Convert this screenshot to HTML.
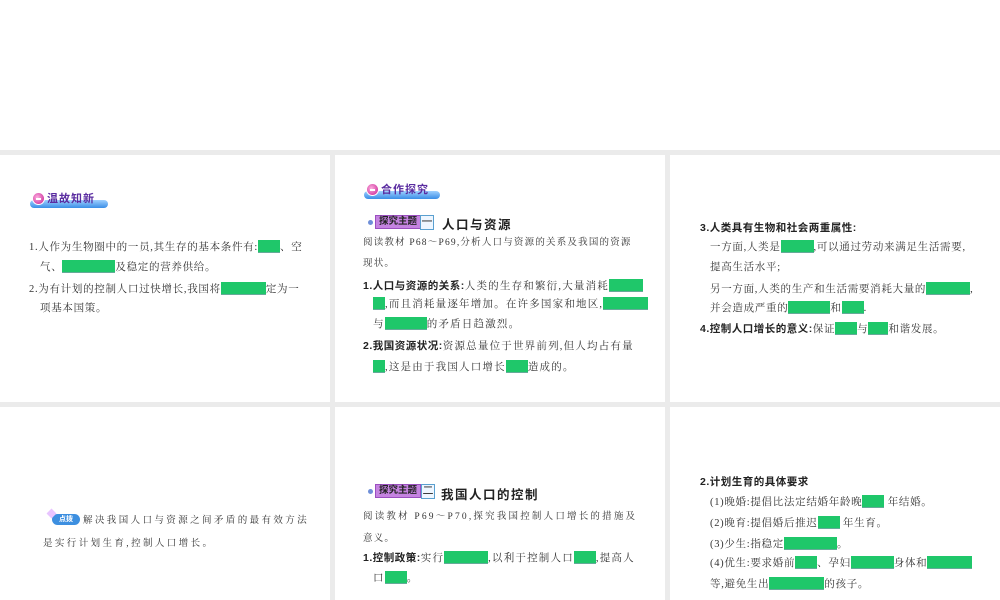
<!DOCTYPE html>
<html><head><meta charset="utf-8">
<style>
*{margin:0;padding:0;box-sizing:border-box}
body{width:1000px;height:600px;background:#fff;position:relative;overflow:hidden;font-family:"Liberation Serif","Noto Serif CJK SC","Noto Sans CJK SC",serif;color:#333}
.g{position:absolute;background:#ebebeb}
.l{position:absolute;font-size:10.5px;letter-spacing:0.7px;line-height:14px;white-space:nowrap}
.p2 .l{letter-spacing:1.2px}
.b{font-family:"Liberation Sans","Noto Sans CJK SC",sans-serif;font-weight:bold;color:#222;letter-spacing:0.5px}
.k{display:inline-block;height:13px;background:#1fc76a;vertical-align:-3px;border-bottom:1px solid #6a9}
.badge{position:absolute;height:18px}
.badge .bar{position:absolute;left:0;right:0;bottom:0;height:8px;border-radius:8px;background:linear-gradient(#9fd0ff,#3a8ee6)}
.badge .c{position:absolute;left:2px;top:2px;width:13px;height:13px;border-radius:50%;background:radial-gradient(circle at 40% 40%,#ffb0e0,#c2188f);border:1px solid #fff}
.badge .c:after{content:"";position:absolute;left:3px;top:5px;width:5px;height:1.5px;background:#fff}
.badge .t{position:absolute;left:17px;top:0;font-size:11px;font-weight:bold;color:#5a2ca0;letter-spacing:1px;font-family:"Liberation Sans","Noto Sans CJK SC",sans-serif}
.tag{position:absolute;height:14px;background:#c583e0;border:1px solid #9a4fc0;font-size:9.5px;font-weight:bold;color:#222;line-height:12px;padding:0 3px;font-family:"Liberation Sans","Noto Sans CJK SC",sans-serif}
.num{position:absolute;width:14px;height:15px;border:1.5px solid #5aa0d0;font-size:11px;display:flex;align-items:center;justify-content:center;font-family:"Liberation Sans","Noto Sans CJK SC",sans-serif;color:#222;background:#eef6ff;line-height:1}
.dot{position:absolute;width:5px;height:5px;border-radius:50%;background:#6f8fd8}
.ttl{position:absolute;font-size:12.5px;font-weight:bold;letter-spacing:1.5px;font-family:"Liberation Sans","Noto Sans CJK SC",sans-serif;color:#222}
</style></head><body>
<div class="g" style="left:0;top:150px;width:1000px;height:5px"></div>
<div class="g" style="left:0;top:402px;width:1000px;height:5px"></div>
<div class="g" style="left:330px;top:150px;width:5px;height:450px"></div>
<div class="g" style="left:665px;top:150px;width:5px;height:450px"></div>

<!-- panel 1 -->
<div class="badge" style="left:30px;top:190px;width:78px"><div class="bar"></div><div class="c"></div><div class="t">温故知新</div></div>
<div class="l" style="left:29px;top:240px">1.人作为生物圈中的一员,其生存的基本条件有:<span class="k" style="width:22px"></span>、空</div>
<div class="l" style="left:40px;top:260px">气、<span class="k" style="width:53px"></span>及稳定的营养供给。</div>
<div class="l" style="left:29px;top:282px">2.为有计划的控制人口过快增长,我国将<span class="k" style="width:45px"></span>定为一</div>
<div class="l" style="left:40px;top:302px">项基本国策。</div>

<!-- panel 2 -->
<div class="p2">
<div class="badge" style="left:364px;top:181px;width:76px"><div class="bar"></div><div class="c"></div><div class="t">合作探究</div></div>
<div class="dot" style="left:368px;top:220px"></div>
<div class="tag" style="left:375px;top:215px">探究主题</div>
<div class="num" style="left:420px;top:215px">一</div>
<div class="ttl" style="left:442px;top:214px">人口与资源</div>
<div class="l" style="left:363px;top:236px;font-size:9.5px">阅读教材 P68～P69,分析人口与资源的关系及我国的资源</div>
<div class="l" style="left:363px;top:257px;font-size:9.5px">现状。</div>
<div class="l" style="left:363px;top:279px"><span class="b">1.人口与资源的关系:</span>人类的生存和繁衍,大量消耗<span class="k" style="width:34px"></span></div>
<div class="l" style="left:373px;top:297px"><span class="k" style="width:12px"></span>,而且消耗量逐年增加。在许多国家和地区,<span class="k" style="width:45px"></span></div>
<div class="l" style="left:373px;top:317px">与<span class="k" style="width:42px"></span>的矛盾日趋激烈。</div>
<div class="l" style="left:363px;top:339px"><span class="b">2.我国资源状况:</span>资源总量位于世界前列,但人均占有量</div>
<div class="l" style="left:373px;top:360px"><span class="k" style="width:12px"></span>,这是由于我国人口增长<span class="k" style="width:22px"></span>造成的。</div>
</div>

<!-- panel 3 -->
<div class="l" style="left:700px;top:221px"><span class="b">3.人类具有生物和社会两重属性:</span></div>
<div class="l" style="left:710px;top:240px">一方面,人类是<span class="k" style="width:33px"></span>,可以通过劳动来满足生活需要,</div>
<div class="l" style="left:710px;top:261px">提高生活水平;</div>
<div class="l" style="left:710px;top:282px">另一方面,人类的生产和生活需要消耗大量的<span class="k" style="width:44px"></span>,</div>
<div class="l" style="left:710px;top:301px">并会造成严重的<span class="k" style="width:42px"></span>和<span class="k" style="width:22px"></span>.</div>
<div class="l" style="left:700px;top:322px"><span class="b">4.控制人口增长的意义:</span>保证<span class="k" style="width:22px"></span>与<span class="k" style="width:20px"></span>和谐发展。</div>

<!-- panel 4 -->
<div style="position:absolute;left:52px;top:514px;width:28px;height:11px;border-radius:6px;background:#3d8fe0;color:#fff;font-size:7px;font-weight:bold;text-align:center;line-height:11px;font-family:'Noto Sans CJK SC',sans-serif">点拨</div>
<div style="position:absolute;left:48px;top:510px;width:7px;height:7px;background:#e8c4ff;transform:rotate(45deg)"></div>
<div class="l" style="left:83px;top:514px;font-size:9.5px;letter-spacing:2.4px">解决我国人口与资源之间矛盾的最有效方法</div>
<div class="l" style="left:43px;top:537px;font-size:9.5px;letter-spacing:2.4px">是实行计划生育,控制人口增长。</div>

<!-- panel 5 -->
<div class="p2">
<div class="dot" style="left:368px;top:489px"></div>
<div class="tag" style="left:375px;top:484px">探究主题</div>
<div class="num" style="left:421px;top:484px">二</div>
<div class="ttl" style="left:441px;top:484px">我国人口的控制</div>
<div class="l" style="left:363px;top:510px;font-size:9.5px;letter-spacing:2.2px">阅读教材 P69～P70,探究我国控制人口增长的措施及</div>
<div class="l" style="left:363px;top:532px;font-size:9.5px">意义。</div>
<div class="l" style="left:363px;top:551px"><span class="b">1.控制政策:</span>实行<span class="k" style="width:44px"></span>,以利于控制人口<span class="k" style="width:22px"></span>,提高人</div>
<div class="l" style="left:373px;top:571px">口<span class="k" style="width:22px"></span>。</div>
</div>

<!-- panel 6 -->
<div class="l" style="left:700px;top:475px"><span class="b">2.计划生育的具体要求</span></div>
<div class="l" style="left:710px;top:495px">(1)晚婚:提倡比法定结婚年龄晚<span class="k" style="width:22px"></span> 年结婚。</div>
<div class="l" style="left:710px;top:516px">(2)晚育:提倡婚后推迟<span class="k" style="width:22px"></span> 年生育。</div>
<div class="l" style="left:710px;top:537px">(3)少生:指稳定<span class="k" style="width:53px"></span>。</div>
<div class="l" style="left:710px;top:556px">(4)优生:要求婚前<span class="k" style="width:22px"></span>、孕妇<span class="k" style="width:43px"></span>身体和<span class="k" style="width:45px"></span></div>
<div class="l" style="left:710px;top:577px">等,避免生出<span class="k" style="width:55px"></span>的孩子。</div>
</body></html>
